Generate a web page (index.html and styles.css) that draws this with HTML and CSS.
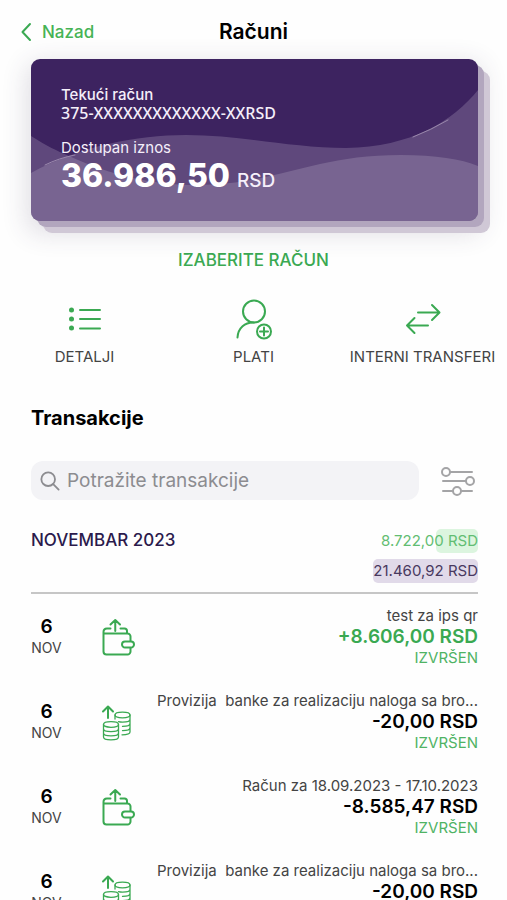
FILE: index.html
```html
<!DOCTYPE html>
<html lang="sr-Latn">
<head>
<meta charset="utf-8">
<meta name="viewport" content="width=device-width, initial-scale=1">
<title>Računi</title>
<link rel="stylesheet" href="styles.css">
</head>
<body>
<svg class="defs" aria-hidden="true">
  <symbol id="wallet" viewBox="0 0 34 38">
    <path d="M2.500 15.500h24a3 3 0 0 1 3 3v15a3 3 0 0 1-3 3h-21a3 3 0 0 1-3-3V14q0-3.500 3.500-3.500h3.500M19.500 10.500h4q2.500 0 2.500 2.500v2M14.250 13V2.500M9.500 6.500l4.750-4.500 4.750 4.500"/>
    <path class="knob" d="M24 23.500h6a2.500 2.500 0 0 1 0 6h-6a3 3 0 0 1 0-6z"/>
  </symbol>
  <symbol id="coins" viewBox="0 0 34 38">
    <path d="M7 15V4M2 8.500l5-5 5 5"/>
    <g class="thin">
      <ellipse cx="21.500" cy="12" rx="7.500" ry="2.800"/>
      <path d="M14 12v4M29 12v17c0 1.800-3.500 2.800-8 2.800M29 16.200c0 1.700-3.400 2.900-7.500 2.900-1.500 0-3-.2-4-.5M29 20.500c0 1.700-3.400 2.900-7.500 2.900M29 24.700c0 1.700-3.400 2.900-7.500 2.900"/>
      <ellipse cx="10" cy="21.500" rx="7.500" ry="2.800"/>
      <path d="M2.500 21.500V34c0 1.700 3.400 2.900 7.500 2.900s7.500-1.200 7.500-2.900V21.500M2.500 25.700c0 1.700 3.400 2.900 7.500 2.900s7.500-1.200 7.500-2.900M2.500 30c0 1.700 3.400 2.900 7.500 2.900s7.500-1.200 7.500-2.900"/>
    </g>
  </symbol>
</svg>

<header class="topbar">
  <a class="back" href="#">
    <svg width="12" height="20" viewBox="0 0 12 20"><path d="M10 2L2.500 10l7.500 8"/></svg>
    Nazad
  </a>
  <h1>Računi</h1>
</header>

<main>
  <section class="card">
    <svg class="waves" viewBox="0 0 447 162" preserveAspectRatio="none" aria-hidden="true">
      <path class="wave-a" d="M0 77C16 87 26 92 38 97C80 116 120 126 165 126C245 126 280 96 370 96C405 96 430 100 447 107V162H0Z"/>
      <path class="wave-b" d="M0 114C50 87 105 76 155 76C210 76 260 89 315 89C380 88 422 62 447 31V162H0Z"/>
      <path class="shine" d="M382 78Q400 71 417 61M14 106Q28 99 44 96"/>
    </svg>
    <p class="card-name">Tekući račun</p>
    <p class="card-number">375-XXXXXXXXXXXXX-XXRSD</p>
    <p class="card-label">Dostupan iznos</p>
    <p class="card-amount">36.986,50 <span>RSD</span></p>
  </section>
  <button class="choose" type="button">IZABERITE RAČUN</button>

  <nav class="actions">
    <a href="#">
      <svg width="44" height="44" viewBox="0 0 44 44"><g class="dots"><circle cx="8.500" cy="13" r="2.500"/><circle cx="8.500" cy="22" r="2.500"/><circle cx="8.500" cy="31" r="2.500"/></g><path d="M17 13h20M17 22h20M17 31.500h20"/></svg>
      DETALJI
    </a>
    <a href="#">
      <svg width="44" height="44" viewBox="0 0 44 44"><circle cx="22" cy="14.500" r="11"/><path d="M5.500 40.500C6 31 13 25 22 25.500"/><g class="fine"><circle cx="32" cy="34.500" r="7"/><path d="M32 30.500v8M28 34.500h8"/></g></svg>
      PLATI
    </a>
    <a href="#">
      <svg width="44" height="44" viewBox="0 0 44 44"><path d="M17 15.500h21M31 8l7.500 7.500L31 23M27 28.500H6M13.500 21L6 28.500l7.500 7.500"/></svg>
      INTERNI TRANSFERI
    </a>
  </nav>

  <h2>Transakcije</h2>
  <form class="search-row">
    <label class="search">
      <svg width="20" height="20" viewBox="0 0 22 22"><circle cx="9" cy="9" r="7.500"/><path d="M14.500 14.500l6 6"/></svg>
      <input type="search" placeholder="Potražite transakcije" aria-label="Potražite transakcije">
    </label>
    <button class="filter" type="button" aria-label="Filter">
      <svg width="34" height="30" viewBox="0 0 34 30"><path d="M9 6h22M2 15h23M2 25h10M20 25h11"/><circle cx="5" cy="6" r="4"/><circle cx="29" cy="15" r="4"/><circle cx="16" cy="25" r="4"/></svg>
    </button>
  </form>

  <section class="month">
    <h3>NOVEMBAR 2023</h3>
    <div class="totals">
      <p class="total in"><span class="bar" style="width:40%"></span><span class="sum">8.722,00 RSD</span></p>
      <p class="total out"><span class="bar" style="width:100%"></span><span class="sum">21.460,92 RSD</span></p>
    </div>
  </section>

  <ul class="list">
    <li>
      <div class="date"><b>6</b>NOV</div>
      <svg class="kind" width="34" height="38"><use href="#wallet"/></svg>
      <div class="info"><p>test za ips qr</p><strong class="plus">+8.606,00 RSD</strong><em>IZVRŠEN</em></div>
    </li>
    <li>
      <div class="date"><b>6</b>NOV</div>
      <svg class="kind" width="34" height="38"><use href="#coins"/></svg>
      <div class="info"><p>Provizija&nbsp; banke za realizaciju naloga sa bro...</p><strong>-20,00 RSD</strong><em>IZVRŠEN</em></div>
    </li>
    <li>
      <div class="date"><b>6</b>NOV</div>
      <svg class="kind" width="34" height="38"><use href="#wallet"/></svg>
      <div class="info"><p>Račun za 18.09.2023 - 17.10.2023</p><strong>-8.585,47 RSD</strong><em>IZVRŠEN</em></div>
    </li>
    <li>
      <div class="date"><b>6</b>NOV</div>
      <svg class="kind" width="34" height="38"><use href="#coins"/></svg>
      <div class="info"><p>Provizija&nbsp; banke za realizaciju naloga sa bro...</p><strong>-20,00 RSD</strong><em>IZVRŠEN</em></div>
    </li>
  </ul>
</main>
</body>
</html>
```
FILE: styles.css
```css
* { box-sizing: border-box; margin: 0; padding: 0; }
html { scrollbar-width: none; }
body {
  background: #fefefe;
  color: #000;
  font-family: Inter, "Liberation Sans", sans-serif;
  font-size: 15px;
  line-height: 20px;
}
a { color: inherit; text-decoration: none; }
button { font: inherit; background: none; border: 0; cursor: pointer; }
svg { fill: none; stroke: #3aa952; stroke-width: 2; stroke-linecap: round; stroke-linejoin: round; flex: none; }
.defs { position: absolute; width: 0; height: 0; }

.topbar {
  display: grid;
  grid-template-columns: 1fr auto 1fr;
  align-items: center;
  padding: 20px 20px 15px;
}
.back { display: flex; align-items: center; gap: 10px; color: #46b355; font-size: 17px; font-weight: 500; line-height: 24px; }
h1 { font-size: 21px; font-weight: 600; line-height: 24px; }

.card {
  position: relative;
  margin: 0 29px 0 31px;
  padding: 27px 30px 27px;
  border-radius: 9px;
  background: #3d2360;
  color: #f5effa;
  box-shadow: 6px 6px 0 #b2a6be, 12px 12px 0 #d0c8d6, 0 8px 26px 4px rgba(60, 50, 90, .16);
}
.waves { position: absolute; inset: 0; width: 100%; height: 100%; border-radius: 9px; stroke: none; }
.wave-a, .wave-b { fill: #c0b4cc; fill-opacity: .26; }
.shine { stroke: #9a88ac; stroke-width: 1; }
.card p { position: relative; line-height: 18px; }
.card .card-name { font-size: 15px; font-weight: 500; }
.card .card-number { font-family: "Noto Sans", sans-serif; font-size: 16px; font-weight: 500; }
.card .card-label { margin-top: 17px; font-size: 15px; }
.card .card-amount { color: #fff; font-size: 32px; font-weight: 800; line-height: 37px; }
.card-amount span { color: #f5effa; font-size: 19px; font-weight: 500; line-height: 20px; }

.choose { display: block; margin: 27px auto 25px; color: #3aa952; font-size: 17px; font-weight: 500; line-height: 24px; }

.actions { display: grid; grid-template-columns: repeat(3, 1fr); }
.actions a { display: flex; flex-direction: column; align-items: center; gap: 6px; color: #444; white-space: nowrap; }
.dots { fill: #3aa952; stroke: none; }
.fine { stroke-width: 2; }

h2 { margin: 39px 31px 31px; font-size: 20px; font-weight: 700; line-height: 24px; }

.search-row { display: flex; align-items: center; gap: 22px; margin: 0 32px 29px 31px; }
.search { display: flex; flex: 1; align-items: center; gap: 7px; height: 39px; padding: 0 9px; border-radius: 12px; background: #f3f3f6; }
.search svg { stroke: #8c8c90; }
.search input { flex: 1; min-width: 0; border: 0; outline: 0; background: none; font: inherit; font-size: 19px; }
.search input::placeholder { color: #8c8c90; opacity: 1; }
.filter { display: flex; }
.filter svg { stroke: #a4a4a6; }

.month { display: flex; justify-content: space-between; margin: 0 29px 0 31px; padding-bottom: 9px; border-bottom: 2px solid #c6c6c6; }
h3 { color: #2b1a4c; font-size: 17px; font-weight: 500; line-height: 22px; }
.totals { display: grid; gap: 6px; }
.total { position: relative; line-height: 24px; text-align: right; }
.bar { position: absolute; top: 0; right: 0; height: 100%; border-radius: 5px; }
.sum { position: relative; }
.in { color: #62bd72; }
.in .bar { background: #dcf5df; }
.out { color: #49395f; }
.out .bar { background: #e1dae9; }

.list { list-style: none; margin: 0 29px 0 31px; }
.list li { display: flex; align-items: center; padding: 12px 0 11px; }
.date { width: 31px; color: #444; font-size: 14px; text-align: center; }
.date b { display: block; color: #000; font-size: 19px; font-weight: 600; line-height: 22px; }
.kind { margin-left: 39px; }
.info { display: grid; flex: 1; gap: 1px; color: #444; text-align: right; white-space: nowrap; }
.info strong { color: #000; font-size: 19px; font-weight: 600; }
.info .plus { color: #3aa952; }
.info em { color: #4fb364; font-style: normal; }
.knob { fill: #fefefe; }
.thin { stroke-width: 1.3; }
```
